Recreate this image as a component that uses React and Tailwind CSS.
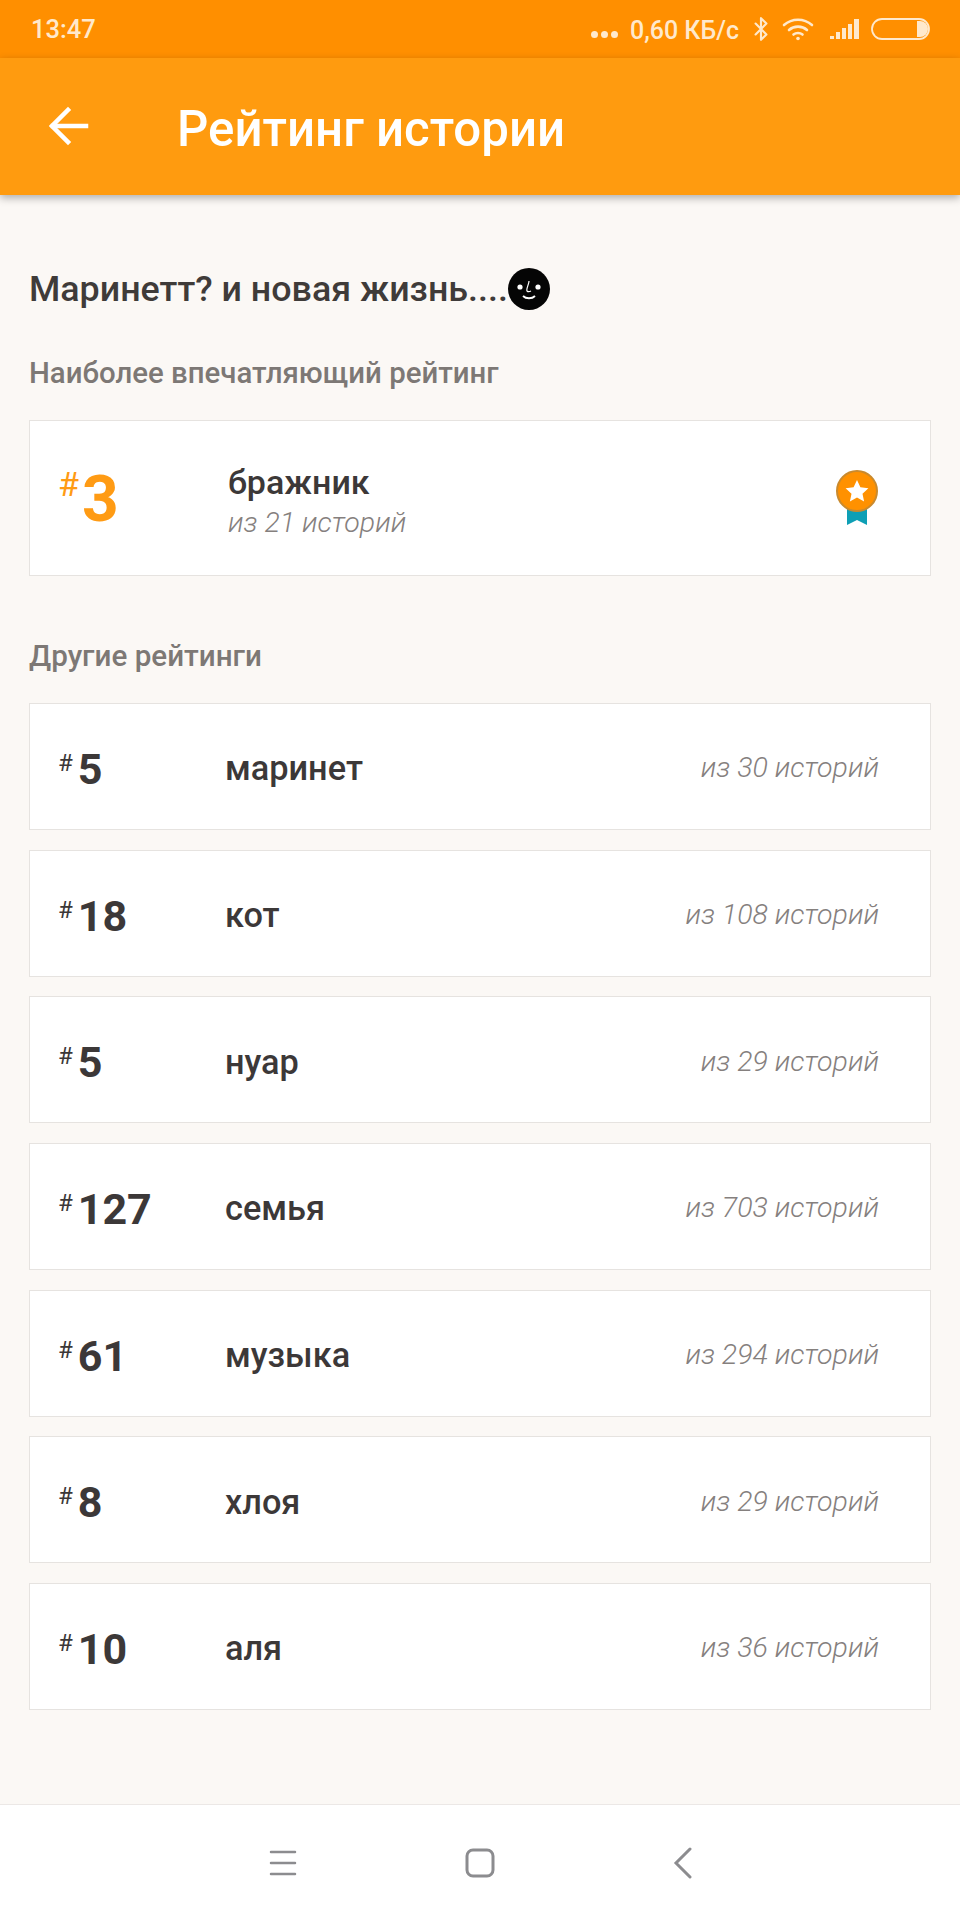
import React from "react";
import { Bluetooth } from "lucide-react";

const rows = [
  { rank: 5, name: "маринет", total: "из 30 историй" },
  { rank: 18, name: "кот", total: "из 108 историй" },
  { rank: 5, name: "нуар", total: "из 29 историй" },
  { rank: 127, name: "семья", total: "из 703 историй" },
  { rank: 61, name: "музыка", total: "из 294 историй" },
  { rank: 8, name: "хлоя", total: "из 29 историй" },
  { rank: 10, name: "аля", total: "из 36 историй" },
];

const StatusBar = () => (
  <div className="h-[58px] bg-[#ff8f00] flex items-center pl-[31px] pr-[29px] text-[#ffe9cc] font-medium">
    <span className="text-[25.500px] leading-none mt-[2px]">13:47</span>
    <div className="ml-auto flex items-center">
      <div className="flex gap-[3px] mt-[10px] mr-[12px]">
        <span className="w-[7px] h-[7px] rounded-full bg-[#ffe9cc]" />
        <span className="w-[7px] h-[7px] rounded-full bg-[#ffe9cc]" />
        <span className="w-[7px] h-[7px] rounded-full bg-[#ffe9cc]" />
      </div>
      <span className="text-[25px] leading-none mt-[2px]">0,60 КБ/с</span>
      <Bluetooth className="w-[26px] h-[26px] ml-[9px]" strokeWidth={2} />
      <svg className="ml-[8px]" width="32" height="24" viewBox="0 0 32 24" fill="none" stroke="currentColor" strokeWidth="2.6" strokeLinecap="round">
        <path d="M2 8c8-7 20-7 28 0" />
        <path d="M7 13c5-4.5 13-4.5 18 0" />
        <path d="M11.5 17.5c2.500-2 6.500-2 9 0" />
        <circle cx="16" cy="21.500" r="1.800" fill="currentColor" stroke="none" />
      </svg>
      <svg className="ml-[16px]" width="30" height="22" viewBox="0 0 30 22" fill="currentColor">
        <rect x="0" y="18" width="4" height="3" />
        <rect x="6" y="14" width="4" height="7" />
        <rect x="12" y="10" width="4" height="11" />
        <rect x="18" y="6" width="4" height="15" />
        <rect x="24" y="1" width="5" height="20" />
      </svg>
      <svg className="ml-[11px]" width="60" height="24" viewBox="0 0 60 24" fill="none">
        <rect x="1" y="2" width="57" height="20" rx="10" stroke="currentColor" strokeWidth="1.800" />
        <path d="M46 4h3a8 8 0 0 1 0 16h-3z" fill="currentColor" />
      </svg>
    </div>
  </div>
);

const AppBar = () => (
  <div className="relative z-10 h-[137px] bg-[#ff9b0f] flex items-center shadow-[0_3px_8px_rgba(0,0,0,0.3)] text-white">
    <svg className="ml-[49px] -mt-[2px]" width="40" height="40" viewBox="0 0 40 40" fill="none" stroke="currentColor" strokeWidth="4.500" strokeLinecap="square">
      <path d="M19 4 3 20l16 16" />
      <path d="M4 20h33" />
    </svg>
    <h1 className="ml-[88px] text-[49.200px] leading-none font-medium mt-[7px]">Рейтинг истории</h1>
  </div>
);

const Rank = ({ value, big }) => (
  <div className={big ? "w-[170px] shrink-0 flex text-[#ff9b14] -ml-[1px]" : "w-[167px] shrink-0 flex text-[#3c3838] -ml-[1px]"}>
    <span className={big ? "text-[34px] leading-none font-normal mt-[2px] mr-[3px]" : "text-[24px] leading-none font-normal mt-[5px] mr-[5px]"}>#</span>
    <span className={big ? "text-[64px] leading-none font-bold mt-[3px]" : "text-[43px] leading-none font-bold mt-[2px]"}>{value}</span>
  </div>
);

const Medal = () => (
  <svg width="44" height="56" viewBox="0 0 44 56">
    <path d="M12 34h20v21l-10-5-10 5z" fill="#0e9fb5" />
    <circle cx="22" cy="21" r="20" fill="#ff9100" stroke="#c98a2e" strokeWidth="2" />
    <path d="M22 10l3.400 7.300 8 1-5.900 5.400 1.600 7.900-7.100-4-7.100 4 1.600-7.900-5.900-5.400 8-1z" fill="#fff" />
  </svg>
);

const Face = () => (
  <svg width="42" height="42" viewBox="0 0 42 42" className="shrink-0">
    <circle cx="21" cy="21" r="21" fill="#050505" />
    <circle cx="12" cy="19" r="2.600" fill="#fff" />
    <circle cx="30" cy="19" r="2.600" fill="#fff" />
    <path d="M21 13c0 3-3 8-2 10 1 1 3 .5 4 0" fill="none" stroke="#fff" strokeWidth="1.200" />
    <path d="M15 28c3 3 9 3 12 0" fill="none" stroke="#fff" strokeWidth="1.800" />
  </svg>
);

const App = () => {
  return (
    <div className="w-[960px] h-[1920px] flex flex-col bg-[#fbf8f5] font-['Roboto',sans-serif]">
      <StatusBar />
      <AppBar />

      <main className="flex-1 px-[29px]">
        <div className="flex items-center mt-[73px] h-[42px]">
          <h2 className="text-[35.800px] leading-none font-medium text-[#3f3b39] mt-[1px]">Маринетт? и новая жизнь....</h2>
          <Face />
        </div>
        <p className="mt-[46px] text-[29.400px] leading-[34px] font-medium text-[#7d7875]">Наиболее впечатляющий рейтинг</p>

        <div className="mt-[30px] h-[156px] bg-white border border-[#e6e3e0] flex items-center pl-[29px] pr-[51px]">
          <Rank value={3} big />
          <div className="mt-[5px]">
            <div className="text-[34px] leading-[40px] font-medium text-[#3c3838]">бражник</div>
            <div className="text-[28.500px] leading-[34px] font-light italic text-[#85807e] mt-[4px]">из 21 историй</div>
          </div>
          <div className="ml-auto">
            <Medal />
          </div>
        </div>

        <p className="mt-[63px] text-[29.600px] leading-[34px] font-medium text-[#7d7875]">Другие рейтинги</p>

        <div className="mt-[30px] flex flex-col gap-[19.670px]">
          {rows.map((row, idx) => (
            <div key={idx} className="h-[127px] bg-white border border-[#e6e3e0] flex items-center pt-[4px] pl-[29px] pr-[51px]">
              <Rank value={row.rank} />
              <span className="text-[34.300px] leading-none font-medium text-[#3c3838]">{row.name}</span>
              <span className="ml-auto text-[28.500px] leading-none font-light italic text-[#85807e]">{row.total}</span>
            </div>
          ))}
        </div>
      </main>

      <nav className="h-[116px] bg-white border-t border-[#ece8e6] flex items-center text-[#8c8c8f]">
        <svg className="ml-[269px]" width="28" height="30" viewBox="0 0 28 30" stroke="currentColor" strokeWidth="2.500" strokeLinecap="round">
          <path d="M2 4h24M2 15h24M2 26h24" />
        </svg>
        <svg className="ml-[168px]" width="30" height="30" viewBox="0 0 30 30" fill="none" stroke="currentColor" strokeWidth="3">
          <rect x="2" y="2" width="26" height="26" rx="6" />
        </svg>
        <svg className="ml-[178px]" width="20" height="32" viewBox="0 0 20 32" fill="none" stroke="currentColor" strokeWidth="3" strokeLinecap="round">
          <path d="M17 2 3 16l14 14" />
        </svg>
      </nav>
    </div>
  );
};

export default App;
